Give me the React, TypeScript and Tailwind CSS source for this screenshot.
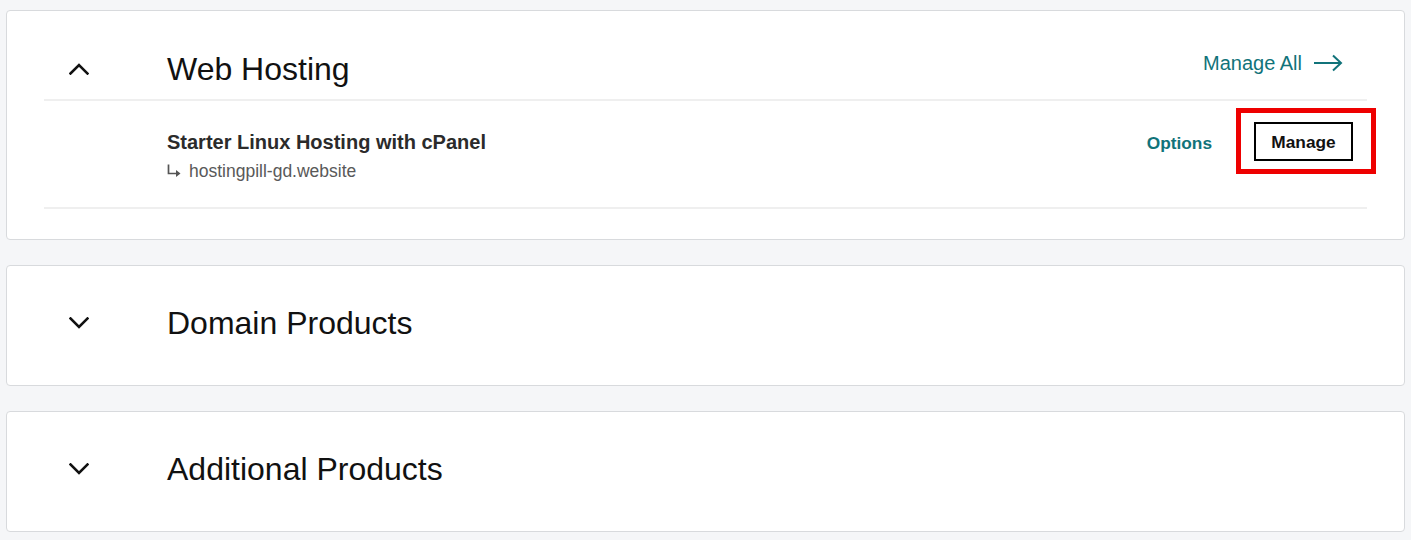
import React from "react";

const font = { fontFamily: '"Liberation Sans", Arial, sans-serif' };

function ChevronUp() {
  return (
    <svg width="20" height="12" viewBox="0 0 20 12" fill="none">
      <polyline points="1.5,10.5 10,2 18.5,10.5" stroke="#111" strokeWidth="2.6" strokeLinecap="square" />
    </svg>
  );
}

function ChevronDown() {
  return (
    <svg width="20" height="12" viewBox="0 0 20 12" fill="none">
      <polyline points="1.5,1.5 10,10 18.5,1.5" stroke="#111" strokeWidth="2.6" strokeLinecap="square" />
    </svg>
  );
}

function LongArrow() {
  return (
    <svg width="30" height="18" viewBox="0 0 30 18" fill="none">
      <line x1="1" y1="9" x2="28" y2="9" stroke="#11737a" strokeWidth="2" />
      <polyline points="20,1.5 28,9 20,16.5" stroke="#11737a" strokeWidth="2" fill="none" />
    </svg>
  );
}

function SubArrow() {
  return (
    <svg width="14" height="14" viewBox="0 0 14 14" fill="none">
      <path d="M1.5 0.5 V9.5 H12" stroke="#555" strokeWidth="1.7" fill="none" />
      <path d="M9 6 L13.5 9.5 L9 13 Z" fill="#555" />
    </svg>
  );
}

function CollapsedCard({ title }: { title: string }) {
  return (
    <div className="bg-white border border-[#d8dadd] rounded-[4px] px-[37px] pt-[37px] pb-[42px]">
      <div className="flex items-center h-[40px]">
        <div className="w-[123px] pl-[25px] flex items-center">
          <ChevronDown />
        </div>
        <div className="text-[32px] leading-[40px] text-[#111]">{title}</div>
      </div>
    </div>
  );
}

export default function App() {
  return (
    <div className="min-h-[540px] bg-[#f5f6f8] px-[6px] pt-[10px] pb-[10px] flex flex-col gap-[25px]" style={font}>
      <div className="bg-white border border-[#d8dadd] rounded-[4px] px-[37px] pt-[38px] pb-[30px]">
        <div className="flex items-center h-[40px] mb-[10px]">
          <div className="w-[123px] pl-[25px] flex items-center">
            <ChevronUp />
          </div>
          <div className="text-[32px] leading-[40px] text-[#111]">Web Hosting</div>
          <div className="ml-auto self-start flex items-center gap-[11px] pr-[24px] text-[20px] leading-[28px] text-[#11737a]">
            <span>Manage All</span>
            <LongArrow />
          </div>
        </div>
        <div className="border-t-2 border-[#efefef]" />
        <div className="flex items-start pt-[21px] pb-[24px] border-b-2 border-[#efefef]">
          <div className="ml-[123px] mt-[8px] flex flex-col gap-[5px]">
            <div className="text-[20px] leading-[24px] font-bold text-[#2b2b2b]">Starter Linux Hosting with cPanel</div>
            <div className="flex items-center gap-[8px] text-[17.5px] leading-[24px] text-[#595959]">
              <SubArrow />
              <span>hostingpill-gd.website</span>
            </div>
          </div>
          <div className="ml-auto flex items-center mr-[14px]">
            <span className="pt-[4px] text-[17.3px] font-bold text-[#11737a]">Options</span>
            <div className="relative ml-[42px]">
              <div className="absolute -top-[14px] -bottom-[13px] -left-[18px] -right-[23px] border-[5px] border-[#ee0000] pointer-events-none" />
              <button className="w-[99px] h-[39px] pt-[3px] border-2 border-black bg-white text-[17.3px] font-bold text-[#111] flex items-center justify-center">
                Manage
              </button>
            </div>
          </div>
        </div>
      </div>
      <CollapsedCard title="Domain Products" />
      <CollapsedCard title="Additional Products" />
    </div>
  );
}
